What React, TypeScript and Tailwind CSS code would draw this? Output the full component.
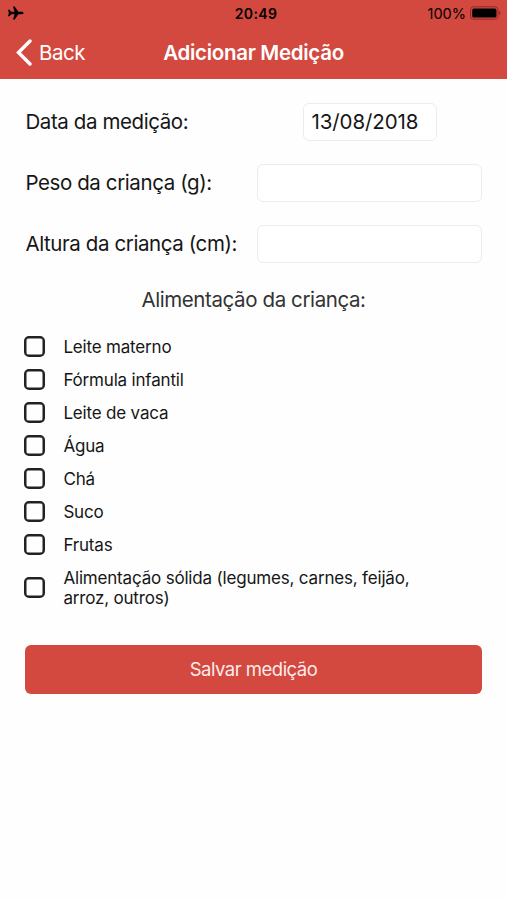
import { useState } from "react";

const FOODS = [
  "Leite materno",
  "Fórmula infantil",
  "Leite de vaca",
  "Água",
  "Chá",
  "Suco",
  "Frutas",
  "Alimentação sólida (legumes, carnes, feijão, arroz, outros)",
];

function StatusBar() {
  return (
    <div className="grid h-[27px] grid-cols-3 items-center pl-[7px] pr-[6px] text-black">
      <svg width="17" height="14" viewBox="0 0 17 14" fill="currentColor" className="-mt-px">
        <path d="M16.600 7c0 .8-.9 1.200-2 1.200h-3.200L7.700 13.500H6L7.600 8.200H4.200L2.500 10.200H1L1.900 7 1 3.800h1.500l1.700 2h3.400L6 .5h1.700l3.700 5.300h3.200c1.100 0 2 .4 2 1.200z" />
      </svg>
      <span className="pl-[4px] text-center text-[14px] font-semibold leading-none tracking-[0.4px]">20:49</span>
      <div className="flex items-center justify-end gap-[4px]">
        <span className="pt-[2px] text-[14.500px] leading-none">100%</span>
        <svg width="31" height="14" viewBox="0 0 32 14" className="-mt-px">
          <rect x="0.600" y="0.600" width="28.300" height="12.800" rx="3" fill="none" stroke="#8f2a23" />
          <rect x="2.300" y="2.300" width="25" height="9.400" rx="1.600" />
          <path d="M30 5v4c.9-.3 1.400-1.100 1.400-2S30.900 5.300 30 5z" fill="#8f2a23" />
        </svg>
      </div>
    </div>
  );
}

function Field({ label, value, short }: { label: string; value: string; short?: boolean }) {
  const [text, setText] = useState(value);
  return (
    <label className="flex h-[37px] items-center">
      <span className="w-[232px] shrink-0 whitespace-nowrap text-[20.500px] leading-[21px] tracking-[-0.4px]">{label}</span>
      <span className="flex flex-1 justify-center">
        <input
          value={text}
          onChange={(e) => setText(e.target.value)}
          className={`h-[38px] rounded-[6px] border border-[#ececec] bg-white px-2 text-[20.500px] tracking-[-0.1px] outline-none ${short ? "w-[134px]" : "w-full"}`}
        />
      </span>
    </label>
  );
}

export default function App() {
  const [checked, setChecked] = useState<string[]>([]);

  const toggle = (food: string) =>
    setChecked((prev) => (prev.includes(food) ? prev.filter((f) => f !== food) : [...prev, food]));

  return (
    <div className="min-h-screen bg-[#fefefe] font-['Inter',sans-serif] text-[#161616]">
      {/* Header */}
      <header className="h-[79px] bg-[#d3483f]">
        <StatusBar />
        <div className="grid h-[51px] grid-cols-[1fr_auto_1fr] items-center text-white">
          <button className="flex items-center gap-[6px] pl-[16px] text-[20.500px] leading-none tracking-[-0.5px]">
            <svg width="17" height="27" viewBox="0 0 17 27" fill="none" stroke="currentColor" strokeWidth="3.400" strokeLinecap="round">
              <path d="M14 2 2.500 13.500 14 25" />
            </svg>
            <span className="pt-[2px]">Back</span>
          </button>
          <h1 className="pt-[2px] text-[20.500px] font-semibold leading-none tracking-[-0.3px]">Adicionar Medição</h1>
        </div>
      </header>

      <main className="px-[25.400px] pt-[24px]">
        <div className="flex flex-col gap-6">
          <Field label="Data da medição:" value="13/08/2018" short />
          <Field label="Peso da criança (g):" value="" />
          <Field label="Altura da criança (cm):" value="" />
        </div>

        <h2 className="mt-[26px] text-center text-[20.500px] leading-6 tracking-[-0.4px] text-[#333]">
          Alimentação da criança:
        </h2>

        {/* Food list */}
        <ul className="mt-[18px]">
          {FOODS.map((food) => (
            <li key={food}>
              <label className="flex min-h-[33px] items-center py-[5.500px]">
                <input
                  type="checkbox"
                  checked={checked.includes(food)}
                  onChange={() => toggle(food)}
                  className="-ml-px size-[21px] shrink-0 appearance-none rounded-[5px] border-2 border-[#222] shadow-[inset_0_0_0_0.5px_#222] checked:bg-[#222]"
                />
                <span className="ml-[18px] w-[370px] pt-px text-[17px] leading-[20.500px] tracking-[-0.18px]">{food}</span>
              </label>
            </li>
          ))}
        </ul>

        <button className="mt-[31px] h-[49px] w-full rounded-[6px] bg-[#d3483f] pt-px text-[18.500px] tracking-[-0.5px] text-[#fdeceb]">
          Salvar medição
        </button>
      </main>
    </div>
  );
}
